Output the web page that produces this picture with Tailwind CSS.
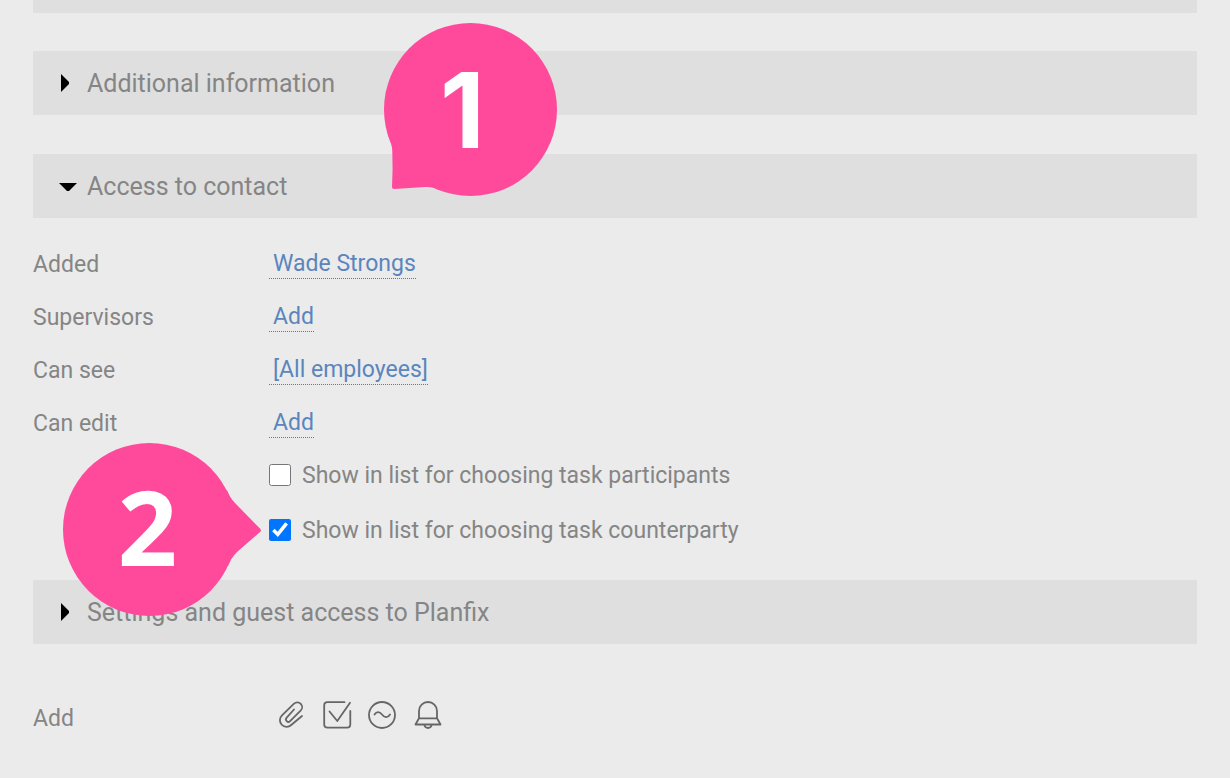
<!DOCTYPE html>
<html lang="en">
<head>
  <meta charset="UTF-8" />
  <meta name="viewport" content="width=device-width, initial-scale=1.0"/>
  <title>Contact</title>
  <script src="https://cdn.jsdelivr.net/npm/@tailwindcss/browser@4"></script>
</head>
<body class="bg-[#ebebeb] text-[#858585] font-['Roboto',sans-serif] text-[23px] leading-7">

  <main class="relative px-[33px] pb-8">

    <!-- Previous section, scrolled away -->
    <div class="h-[13px] bg-[#dfdfdf]"></div>

    <!-- Additional information -->
    <button type="button" aria-expanded="false" class="mt-[38px] flex h-16 w-full items-center gap-[10px] bg-[#dfdfdf] pl-[26px] text-left text-[25px]">
      <svg class="h-[18px] w-[18px]" viewBox="0 0 18 18"><path d="M2 0v18l8-8V8z"/></svg>
      <span class="pt-0.5">Additional information</span>
    </button>

    <!-- Access to contact -->
    <button type="button" aria-expanded="true" class="mt-[39px] flex h-16 w-full items-center gap-[10px] bg-[#dfdfdf] pl-[26px] text-left text-[25px]">
      <svg class="h-[18px] w-[18px]" viewBox="0 0 18 18"><path d="M0 6h18l-8 8H8z"/></svg>
      <span class="pt-0.5">Access to contact</span>
    </button>

    <section class="pt-5 pb-[25px]">
      <dl class="grid grid-cols-[236px_1fr] auto-rows-[53px] items-center">
        <dt>Added</dt>
        <dd><a href="#" class="inline-block border-b border-dotted border-[#4a7dc0] pl-1 align-top text-[#5b85bd]">Wade Strongs</a></dd>
        <dt>Supervisors</dt>
        <dd><a href="#" class="inline-block border-b border-dotted border-[#4a7dc0] pl-1 align-top text-[#5b85bd]">Add</a></dd>
        <dt>Can see</dt>
        <dd><a href="#" class="inline-block border-b border-dotted border-[#4a7dc0] pl-1 align-top text-[#5b85bd]">[All employees]</a></dd>
        <dt>Can edit</dt>
        <dd><a href="#" class="inline-block border-b border-dotted border-[#4a7dc0] pl-1 align-top text-[#5b85bd]">Add</a></dd>
      </dl>
      <div class="flex flex-col gap-[5px] pl-[236px]">
        <div class="flex h-[50px] items-center gap-[11px]">
          <input id="participants" type="checkbox" class="h-[22px] w-[22px]"/>
          <label for="participants" class="pt-0.5">Show in list for choosing task participants</label>
        </div>
        <div class="flex h-[50px] items-center gap-[11px]">
          <input id="counterparty" type="checkbox" checked class="h-[22px] w-[22px]"/>
          <label for="counterparty" class="pt-0.5">Show in list for choosing task counterparty</label>
        </div>
      </div>
    </section>

    <!-- Settings -->
    <button type="button" aria-expanded="false" class="flex h-16 w-full items-center gap-[10px] bg-[#dfdfdf] pl-[26px] text-left text-[25px]">
      <svg class="h-[18px] w-[18px]" viewBox="0 0 18 18"><path d="M2 0v18l8-8V8z"/></svg>
      <span class="pt-0.5">Settings and guest access to Planfix</span>
    </button>

    <!-- Add toolbar -->
    <div class="mt-12 grid h-[53px] grid-cols-[236px_1fr] items-center">
      <span>Add</span>
      <div class="flex gap-4 pb-2 pl-[7px] text-[#666]">
        <button type="button" aria-label="Attach file">
          <svg class="h-[30px] w-[30px]" viewBox="0 0 30 30" fill="none" stroke="currentColor" stroke-width="1.8" stroke-linecap="round" stroke-linejoin="round">
            <path d="M18 9.500l-7.300 8.200a2.400 2.400 0 0 0 3.400 3.400L24.600 10.700A4.600 4.600 0 0 0 18 3.700L6 15.300A6.500 6.500 0 0 0 15.200 25L26 16"/>
          </svg>
        </button>
        <button type="button" aria-label="Add task">
          <svg class="h-[30px] w-[30px]" viewBox="0 0 30 30" fill="none" stroke="currentColor" stroke-width="1.8" stroke-linecap="round" stroke-linejoin="round">
            <path d="M22.500 2.200H5.500Q2.200 2.200 2.200 5.500V24.500Q2.200 27.700 5.500 27.700H25.100Q28.300 27.700 28.300 24.500V11"/>
            <path d="M7.500 11.500L15.300 21L28 2.800"/>
          </svg>
        </button>
        <button type="button" aria-label="Add action">
          <svg class="h-[30px] w-[30px]" viewBox="0 0 30 30" fill="none" stroke="currentColor" stroke-width="1.8" stroke-linecap="round">
            <circle cx="14" cy="15" r="13"/>
            <path d="M6.500 14.500C8.500 11.500 11.500 11.300 14 14.500S19.500 18.500 22 14.500"/>
          </svg>
        </button>
        <button type="button" aria-label="Add reminder">
          <svg class="h-[30px] w-[30px]" viewBox="0 0 30 30" fill="none" stroke="currentColor" stroke-width="1.8" stroke-linejoin="round">
            <path d="M5 18.300V11a9 9 0 0 1 18 0v7.300zM5 18.300L1.500 24.500H26.500L23 18.300"/>
            <path d="M10.500 25a3.500 3 0 0 0 7 0"/>
          </svg>
        </button>
      </div>
    </div>

    <!-- Step markers -->
    <div class="pointer-events-none absolute top-[23px] left-[384px] flex h-[173px] w-[173px] items-center justify-center">
      <svg class="absolute inset-0 h-full w-full" viewBox="0 0 173 173" fill="#ff4a9c">
        <circle cx="86.500" cy="86.500" r="86.500"/>
        <path d="M4 112Q8 121 8.300 128Q9 147 8 164Q8 166 10 166L41 164Q49 163.500 55 167L90 130L40 90z"/>
      </svg>
      <span class="relative pr-4 font-['Inter'] text-[104px] leading-none font-bold text-white">1</span>
    </div>
    <div class="pointer-events-none absolute top-[443px] left-[63px] flex h-[173px] w-[173px] items-center justify-center">
      <svg class="absolute inset-0 h-full w-full overflow-visible" viewBox="0 0 173 173" fill="#ff4a9c">
        <circle cx="86.500" cy="86.500" r="86.500"/>
        <path d="M164 47Q167 55 172 60L197 85.500Q199 87.500 197 89L174 109Q168 115 165 123L120 90z"/>
      </svg>
      <span class="relative pr-1 pb-2 font-['Open_Sans'] text-[104px] leading-none font-bold text-white">2</span>
    </div>

  </main>

</body>
</html>
